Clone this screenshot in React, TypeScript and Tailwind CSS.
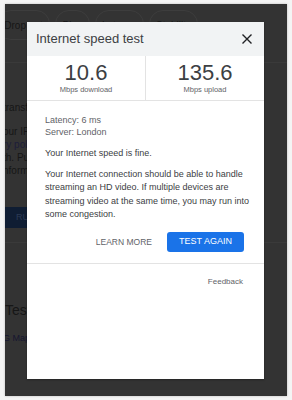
import React from "react";

export default function App() {
  const font = { fontFamily: '"Liberation Sans", Arial, sans-serif' };
  return (
    <div className="w-[292px] h-[400px] bg-[#f4f4f4] p-[4px] pl-[5px] pr-[5px]" style={font}>
      <div className="relative w-full h-full bg-[#333333] overflow-hidden shadow-[0_0_2px_#bbb]">
        {/* dimmed background page */}
        <div className="flex gap-[5px] pt-[6px] pl-0">
          <div className="-ml-[8px] h-[30px] w-[53px] rounded-[14px] border border-[#3d3d3d] text-[10px] text-[#161616] flex items-center justify-center">Drop out</div>
          <div className="h-[30px] w-[35px] rounded-[14px] border border-[#3d3d3d] text-[10px] text-[#161616] flex items-center justify-center">Ping</div>
          <div className="h-[30px] w-[49px] rounded-[14px] border border-[#3d3d3d] text-[10px] text-[#161616] flex items-center justify-center">Latency</div>
          <div className="h-[30px] w-[49px] rounded-[14px] border border-[#3d3d3d] text-[10px] text-[#161616] flex items-center justify-center">Stability</div>
        </div>
        <div className="h-px bg-[#3a3a3a] mt-[22px]" />
        <div className="text-[10px] text-[#161616] leading-[13px] -ml-[2px]">
          <div className="mt-[38px]">transfer</div>
          <div className="mt-[11px]">our IP a</div>
          <div className="text-[#1d1d3a]">ry polic</div>
          <div>th. Pub</div>
          <div>nforma</div>
        </div>
        <div className="mt-[30px] h-[21px] w-[28px] bg-[#0f1d33] text-[9px] text-[#2c3a55] flex items-center pl-[11px]">RU</div>
        <div className="h-px bg-[#3a3a3a] mt-[14px]" />
        <div className="mt-[57px] text-[14px] text-[#161616]">Test</div>
        <div className="mt-[11px] text-[9px] text-[#161630] -ml-[2px]">G Map</div>

        {/* modal */}
        <div className="absolute left-[22px] top-[18px] w-[237px] h-[357px] bg-white flex flex-col shadow-[0_1px_2px_rgba(0,0,0,0.3)]">
          <div className="h-[34px] bg-[#f1f3f4] flex items-center justify-between pl-[9px] pr-[11px] shrink-0">
            <span className="text-[13px] text-[#3c4043]">Internet speed test</span>
            <svg width="12" height="12" viewBox="0 0 12 12" className="mt-[-1px]">
              <path d="M1.5 1.5 L10.5 10.5 M10.5 1.5 L1.5 10.5" stroke="#202124" strokeWidth="1.4" />
            </svg>
          </div>
          <div className="h-[45px] flex border-b border-[#e3e3e3] shrink-0">
            <div className="flex-1 flex flex-col items-center justify-center border-r border-[#e3e3e3]">
              <div className="text-[22px] leading-[22px] text-[#3c4043]">10.6</div>
              <div className="text-[7.5px] leading-[10px] text-[#5f6368] mt-[1px]">Mbps download</div>
            </div>
            <div className="flex-1 flex flex-col items-center justify-center">
              <div className="text-[22px] leading-[22px] text-[#3c4043]">135.6</div>
              <div className="text-[7.5px] leading-[10px] text-[#5f6368] mt-[1px]">Mbps upload</div>
            </div>
          </div>
          <div className="pl-[18px] pr-[20px] pt-[13px] text-[9px]">
            <div className="leading-[12px] text-[#5f6368]">
              <div>Latency: 6 ms</div>
              <div>Server: London</div>
            </div>
            <div className="mt-[9px] leading-[13px] text-[#3c4043]">Your Internet speed is fine.</div>
            <div className="mt-[8px] leading-[13.3px] text-[#3c4043] mr-[-8px]">
              Your Internet connection should be able to handle streaming an HD video. If multiple devices are streaming video at the same time, you may run into some congestion.
            </div>
            <div className="flex justify-end items-center mt-[11px] gap-[15px]">
              <span className="text-[8.5px] text-[#5f6368]">LEARN MORE</span>
              <div className="w-[77px] h-[20px] rounded-[3px] bg-[#1a73e8] text-white text-[9px] flex items-center justify-center">TEST AGAIN</div>
            </div>
          </div>
          <div className="h-px bg-[#e3e3e3] mt-[11px]" />
          <div className="flex justify-end pr-[21px] mt-[12px] text-[8px] text-[#5f6368]">Feedback</div>
        </div>
      </div>
    </div>
  );
}
